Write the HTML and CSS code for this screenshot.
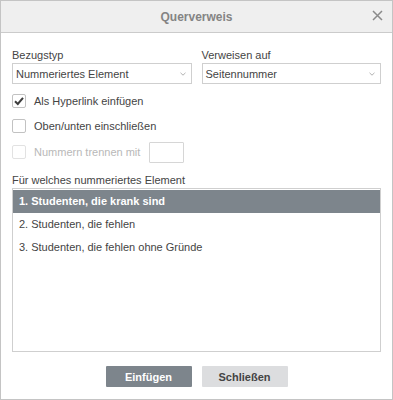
FILE: index.html
```html
<!DOCTYPE html>
<html lang="de">
<head>
    <meta charset="UTF-8">
    <meta name="viewport" content="width=device-width, initial-scale=1.0">
    <title>Querverweis</title>
    <link rel="stylesheet" href="styles.css">
</head>
<body>
    <div class="dialog">
        <!-- Header -->
        <div class="dialog-header">
            <span class="dialog-title">Querverweis</span>
            <button class="close-button" title="Schließen">
                <svg width="11" height="11" viewBox="0 0 11 11">
                    <path d="M1 1 L10 10 M10 1 L1 10" stroke="#8a8a8a" stroke-width="1.5" fill="none"/>
                </svg>
            </button>
        </div>

        <div class="dialog-body">
            <!-- Selects -->
            <div class="field-row">
                <div class="field">
                    <label class="field-label">Bezugstyp</label>
                    <div class="combo">
                        <span>Nummeriertes Element</span>
                        <svg class="caret" width="6" height="4" viewBox="0 0 6 4">
                            <path d="M0.5 0.8 L3 3.2 L5.5 0.8" stroke="#a8a8a8" stroke-width="0.9" fill="none"/>
                        </svg>
                    </div>
                </div>
                <div class="field">
                    <label class="field-label">Verweisen auf</label>
                    <div class="combo">
                        <span>Seitennummer</span>
                        <svg class="caret" width="6" height="4" viewBox="0 0 6 4">
                            <path d="M0.5 0.8 L3 3.2 L5.5 0.8" stroke="#a8a8a8" stroke-width="0.9" fill="none"/>
                        </svg>
                    </div>
                </div>
            </div>

            <!-- Options -->
            <div class="options">
                <div class="check-row">
                    <span class="checkbox">
                        <svg width="12" height="12" viewBox="0 0 12 12">
                            <path d="M2 6.2 L4.8 9 L10 2.8" stroke="#3d3d3d" stroke-width="2" fill="none"/>
                        </svg>
                    </span>
                    <span>Als Hyperlink einfügen</span>
                </div>
                <div class="check-row">
                    <span class="checkbox"></span>
                    <span>Oben/unten einschließen</span>
                </div>
                <div class="check-row disabled">
                    <span class="checkbox"></span>
                    <span>Nummern trennen mit</span>
                    <span class="small-input"></span>
                </div>
            </div>

            <!-- List -->
            <div class="field-label list-label">Für welches nummeriertes Element</div>
            <div class="list">
                <div class="list-item selected">1. Studenten, die krank sind</div>
                <div class="list-item">2. Studenten, die fehlen</div>
                <div class="list-item">3. Studenten, die fehlen ohne Gründe</div>
            </div>

            <!-- Buttons -->
            <div class="buttons">
                <button class="btn btn-primary">Einfügen</button>
                <button class="btn">Schließen</button>
            </div>
        </div>
    </div>
</body>
</html>
```

FILE: styles.css
```css
body {
    margin: 0;
    font-family: "Liberation Sans", Arial, sans-serif;
    font-size: 11px;
    color: #444;
    background: #fff;
}
.dialog {
    width: 393px;
    height: 400px;
    box-sizing: border-box;
    border: 1px solid #c4c4c4;
    display: flex;
    flex-direction: column;
}
.dialog-header {
    position: relative;
    height: 31px;
    background-color: #efefef;
    border-bottom: 1px solid #cbcbcb;
    display: flex;
    align-items: center;
    justify-content: center;
}
.dialog-title {
    font-size: 12px;
    font-weight: bold;
    color: #848484;
}
.close-button {
    position: absolute;
    right: 8px;
    top: 8px;
    width: 13px;
    height: 13px;
    padding: 0;
    border: none;
    background: none;
    display: flex;
    align-items: center;
    justify-content: center;
}
.dialog-body {
    flex: 1;
    padding: 15px 11px 0 11px;
    display: flex;
    flex-direction: column;
}
.field-row {
    display: grid;
    grid-template-columns: 1fr 1fr;
    column-gap: 10px;
}
.field-label {
    display: block;
    line-height: 15px;
    color: #444;
}
.combo {
    height: 21px;
    box-sizing: border-box;
    border: 1px solid #cfcfcf;
    display: flex;
    align-items: center;
    justify-content: space-between;
    padding: 0 5px 0 3px;
    color: #444;
}
.caret {
    margin-top: 1px;
}
.options {
    margin-top: 7px;
    display: flex;
    flex-direction: column;
    gap: 5px;
}
.check-row {
    height: 20px;
    display: flex;
    align-items: center;
    gap: 8px;
}
.checkbox {
    width: 14px;
    height: 14px;
    box-sizing: border-box;
    border: 1px solid #c2c2c2;
    border-radius: 2px;
    display: flex;
    align-items: center;
    justify-content: center;
    background: #fff;
}
.check-row.disabled {
    height: 22px;
    color: #b8b8b8;
}
.check-row.disabled .checkbox {
    border-color: #e2e2e2;
}
.small-input {
    width: 35px;
    height: 21px;
    box-sizing: border-box;
    border: 1px solid #d6d6d6;
    border-radius: 1px;
    margin-left: 1px;
}
.list-label {
    margin-top: 10px;
}
.list {
    height: 164px;
    box-sizing: border-box;
    border: 1px solid #cfcfcf;
    padding-top: 1px;
}
.list-item {
    height: 23px;
    line-height: 23px;
    padding-left: 6px;
    color: #444;
}
.list-item.selected {
    background-color: #7d858c;
    color: #fff;
    font-weight: bold;
}
.buttons {
    margin-top: 14px;
    display: flex;
    justify-content: center;
    gap: 10px;
}
.btn {
    width: 86px;
    height: 21px;
    border: none;
    border-radius: 1px;
    background-color: #dcdddf;
    color: #444;
    font-family: "Liberation Sans", Arial, sans-serif;
    font-size: 11px;
    font-weight: bold;
    padding: 0;
}
.btn-primary {
    background-color: #7d858c;
    color: #fff;
}
```
